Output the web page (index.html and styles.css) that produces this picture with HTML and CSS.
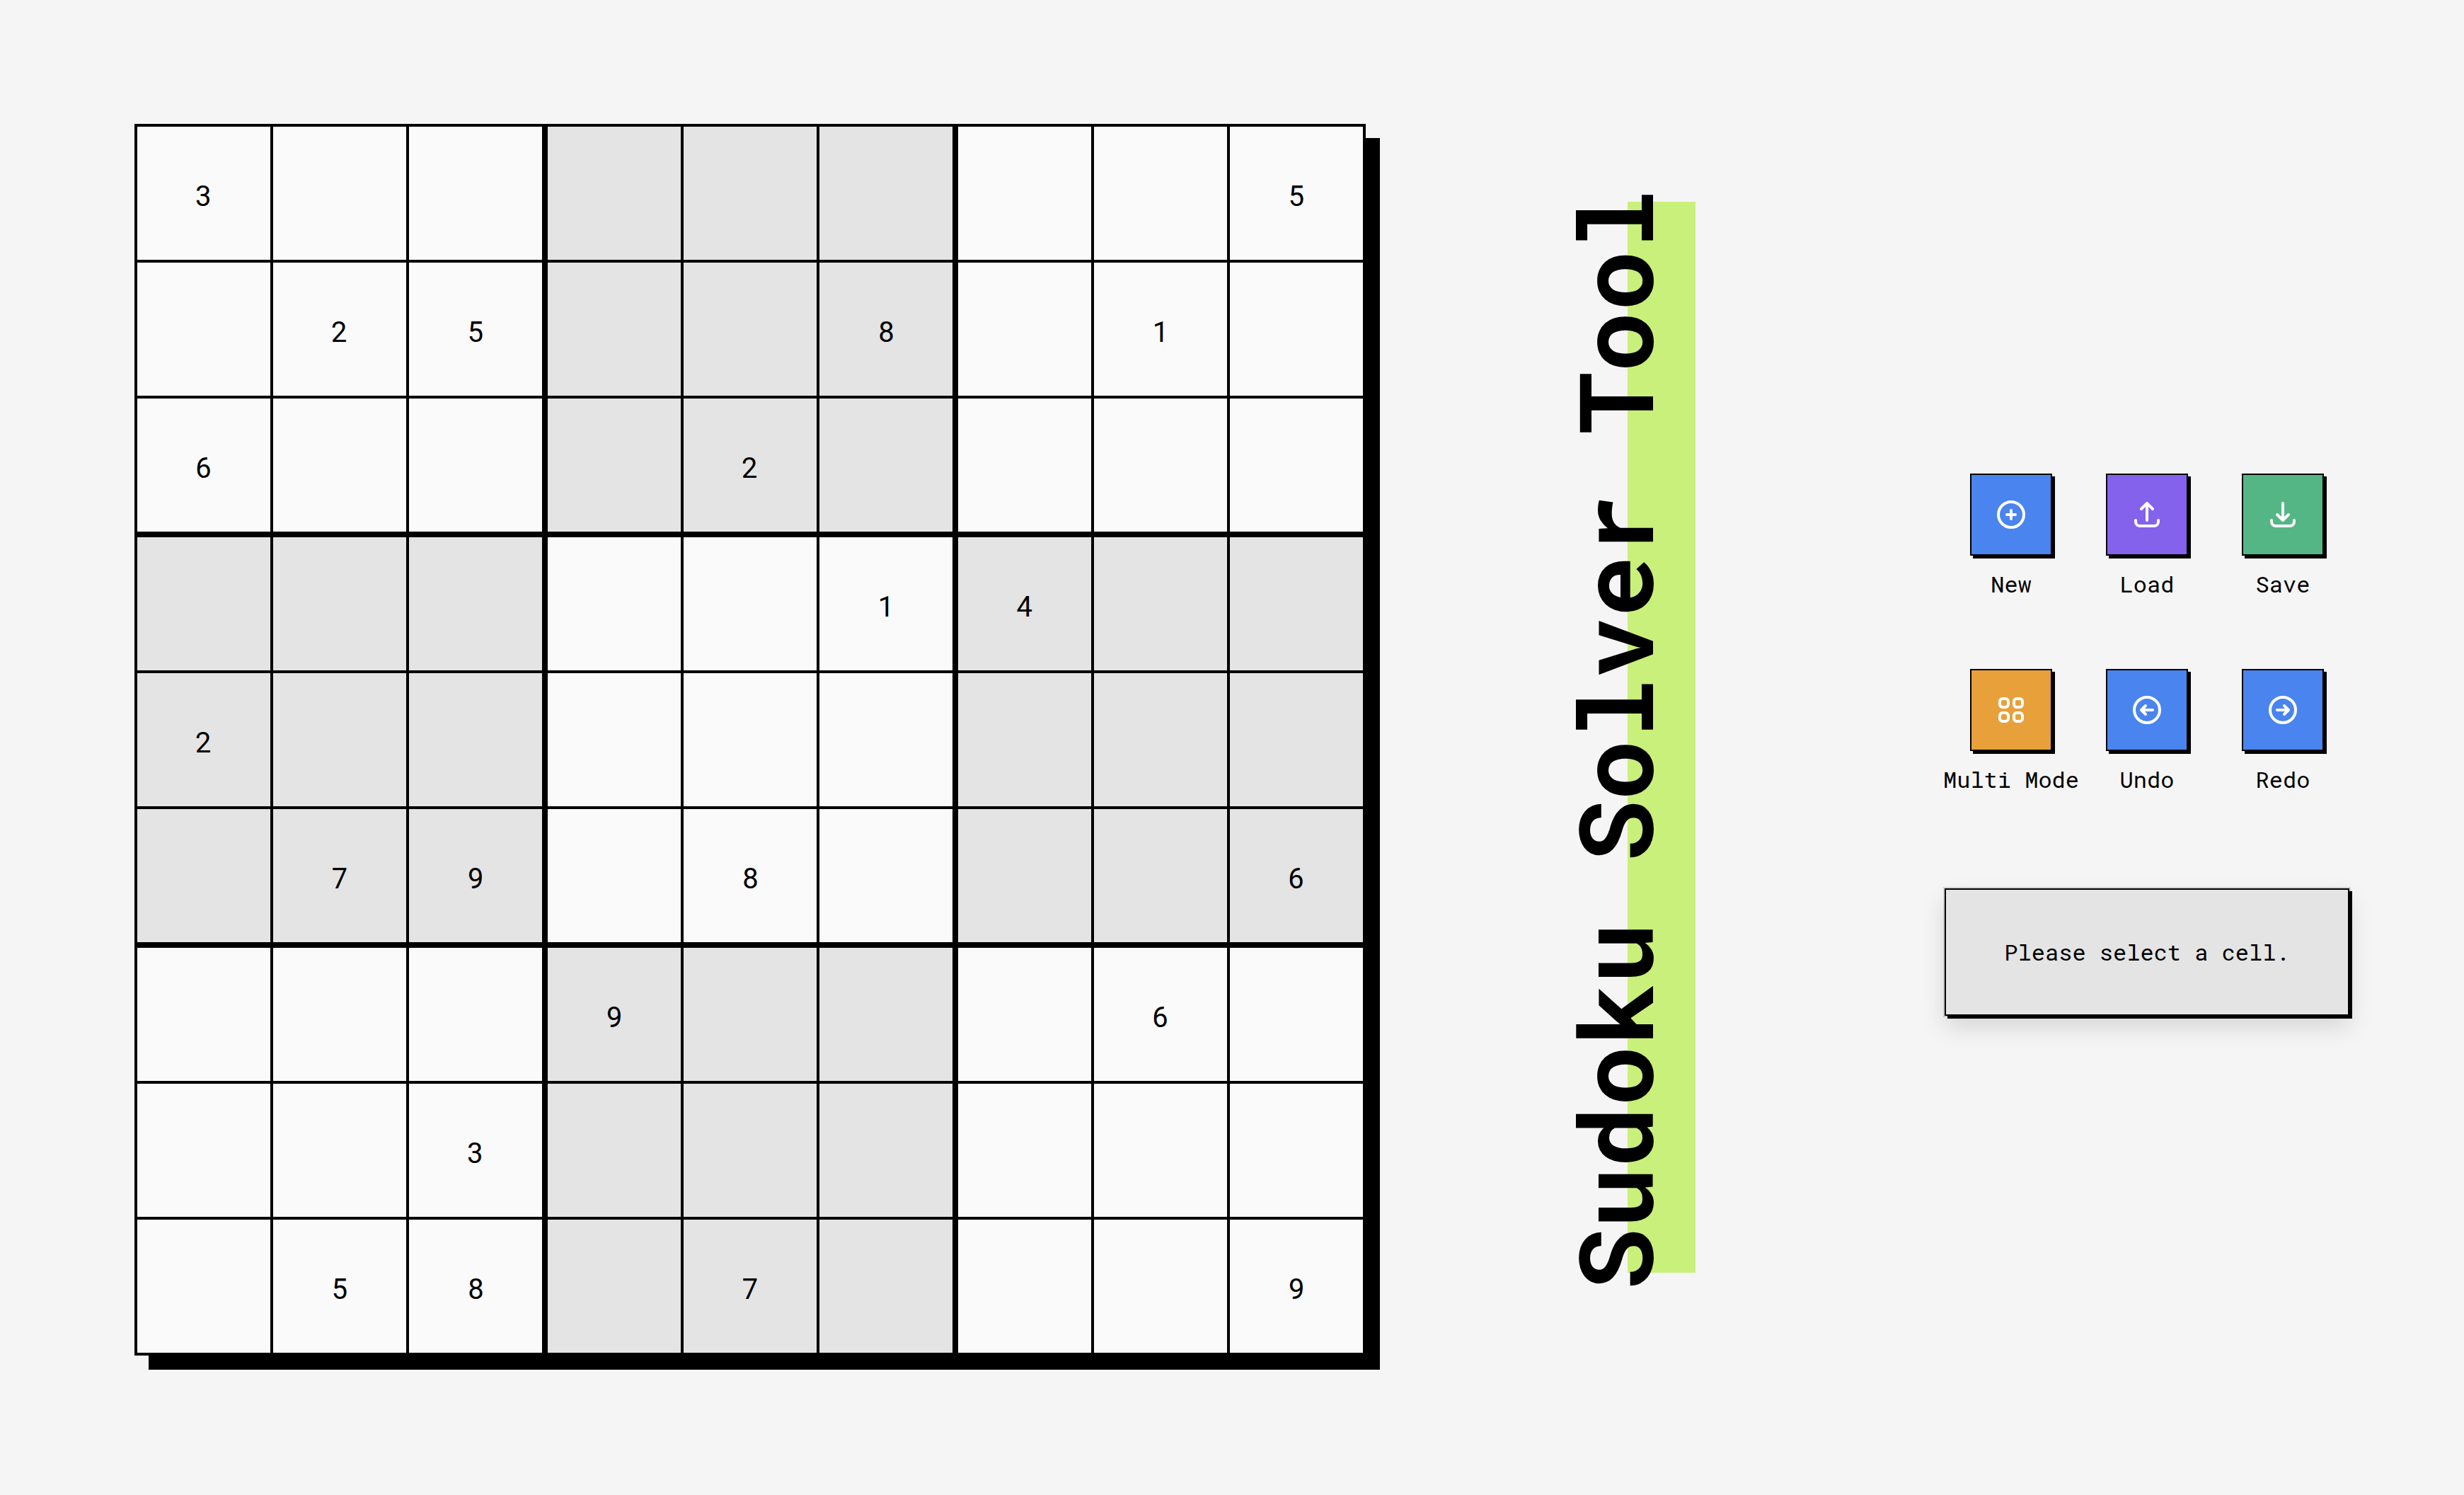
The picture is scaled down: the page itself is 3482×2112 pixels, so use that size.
FILE: index.html
```
<!DOCTYPE html>
<html lang="en">
<head>
  <meta charset="utf-8">
  <meta name="viewport" content="width=device-width, initial-scale=1">
  <title>Sudoku Solver Tool</title>
  <link rel="stylesheet" href="styles.css">
</head>
<body>
  <main class="app">
    <section class="board" id="board" aria-label="Sudoku board"></section>

    <div class="title">
      <h1 class="title-text">Sudoku Solver Tool</h1>
    </div>

    <aside class="controls">
      <div class="tools">
        <div class="tool">
          <button class="tool-button blue" type="button" aria-labelledby="label-new">
            <svg class="icon" viewBox="0 0 24 24" aria-hidden="true"><circle cx="12" cy="12" r="9"/><path d="M12 9v6M9 12h6"/></svg>
          </button>
          <span class="tool-label" id="label-new">New</span>
        </div>
        <div class="tool">
          <button class="tool-button purple" type="button" aria-labelledby="label-load">
            <svg class="icon" viewBox="0 0 24 24" aria-hidden="true"><path d="M4 16v1a3 3 0 0 0 3 3h10a3 3 0 0 0 3-3v-1M8 8l4-4 4 4M12 4v12"/></svg>
          </button>
          <span class="tool-label" id="label-load">Load</span>
        </div>
        <div class="tool">
          <button class="tool-button green" type="button" aria-labelledby="label-save">
            <svg class="icon" viewBox="0 0 24 24" aria-hidden="true"><path d="M4 16v1a3 3 0 0 0 3 3h10a3 3 0 0 0 3-3v-1M16 12l-4 4-4-4M12 16V4"/></svg>
          </button>
          <span class="tool-label" id="label-save">Save</span>
        </div>
        <div class="tool">
          <button class="tool-button orange" type="button" aria-labelledby="label-multi">
            <svg class="icon" viewBox="0 0 24 24" aria-hidden="true"><rect x="4" y="4" width="6" height="6" rx="2"/><rect x="14" y="4" width="6" height="6" rx="2"/><rect x="4" y="14" width="6" height="6" rx="2"/><rect x="14" y="14" width="6" height="6" rx="2"/></svg>
          </button>
          <span class="tool-label" id="label-multi">Multi Mode</span>
        </div>
        <div class="tool">
          <button class="tool-button blue" type="button" aria-labelledby="label-undo">
            <svg class="icon" viewBox="0 0 24 24" aria-hidden="true"><circle cx="12" cy="12" r="9"/><path d="M11 9l-3 3 3 3M8 12h8"/></svg>
          </button>
          <span class="tool-label" id="label-undo">Undo</span>
        </div>
        <div class="tool">
          <button class="tool-button blue" type="button" aria-labelledby="label-redo">
            <svg class="icon" viewBox="0 0 24 24" aria-hidden="true"><circle cx="12" cy="12" r="9"/><path d="M13 15l3-3-3-3M16 12H8"/></svg>
          </button>
          <span class="tool-label" id="label-redo">Redo</span>
        </div>
      </div>
      <p class="message" role="status">Please select a cell.</p>
    </aside>
  </main>
  <script src="board.js"></script>
</body>
</html>
```
FILE: board.js
```
// One string per row; a dot is an empty cell.
const puzzle = [
  "3.......5",
  ".25..8.1.",
  "6...2....",
  ".....14..",
  "2........",
  ".79.8...6",
  "...9...6.",
  "..3......",
  ".58.7...9",
];

const board = document.getElementById("board");

for (let block = 0; block < 9; block++) {
  const box = document.createElement("div");
  box.className = block % 2 ? "block shaded" : "block";
  for (let i = 0; i < 9; i++) {
    const row = Math.floor(block / 3) * 3 + Math.floor(i / 3);
    const col = (block % 3) * 3 + (i % 3);
    const value = puzzle[row][col];
    const cell = document.createElement("button");
    cell.type = "button";
    cell.className = "cell";
    cell.setAttribute("aria-label", `Row ${row + 1}, column ${col + 1}`);
    if (value !== ".") cell.textContent = value;
    box.append(cell);
  }
  board.append(box);
}
```
FILE: styles.css
```
* {
  box-sizing: border-box;
}

body {
  margin: 0;
  background: #f5f5f5;
  color: #000;
  font-family: "Roboto Mono", "Liberation Mono", monospace;
  font-size: 32px;
  font-weight: 450;
  line-height: 48px;
}

.app {
  display: flex;
  align-items: center;
  justify-content: space-between;
  min-height: 100vh;
  padding: 0 160px 22px 190px;
}

/* Board: the black background shows through the gaps as grid lines */
.board {
  flex: 0 1 1740px;
  min-width: 0;
  aspect-ratio: 1;
  display: grid;
  grid-template-columns: repeat(3, 1fr);
  grid-template-rows: repeat(3, 1fr);
  gap: 8px;
  padding: 4px;
  background: #000;
  box-shadow: 20px 20px 0 #000;
}

.block {
  display: grid;
  grid-template-columns: repeat(3, 1fr);
  grid-template-rows: repeat(3, 1fr);
  gap: 4px;
}

.cell {
  min-width: 0;
  padding: 6px 0 0;
  border: 0;
  background: #fafafa;
  color: #000;
  font-family: inherit;
  font-size: 40px;
  font-weight: inherit;
  line-height: 48px;
  cursor: pointer;
}

.shaded .cell {
  background: #e4e4e4;
}

/* Title: runs bottom to top over a highlight band */
.title {
  position: relative;
  z-index: 0;
  padding-right: 116px;
}

.title::before {
  content: "";
  position: absolute;
  z-index: -1;
  top: 18px;
  bottom: 25px;
  right: 72px;
  width: 96px;
  background: #c9f07a;
}

.title-text {
  margin: 0;
  font-size: 144px;
  font-weight: 700;
  line-height: 144px;
  white-space: nowrap;
  writing-mode: vertical-rl;
  transform: rotate(180deg);
}

/* Controls */
.controls {
  display: flex;
  flex-direction: column;
  gap: 130px;
  padding-top: 14px;
}

.tools {
  display: grid;
  grid-template-columns: repeat(3, 192px);
  row-gap: 96px;
}

.tool {
  display: flex;
  flex-direction: column;
  align-items: center;
  gap: 16px;
}

.tool-button {
  display: flex;
  align-items: center;
  justify-content: center;
  width: 116px;
  height: 116px;
  padding: 0;
  border: 2px solid #000;
  box-shadow: 4px 4px 0 #000;
  color: #fff;
  cursor: pointer;
}

.blue {
  background: #4a84ee;
}

.purple {
  background: #8462ec;
}

.green {
  background: #55b685;
}

.orange {
  background: #e8a03a;
}

.icon {
  width: 48px;
  height: 48px;
  fill: none;
  stroke: currentColor;
  stroke-width: 2;
  stroke-linecap: round;
  stroke-linejoin: round;
}

.tool-label {
  white-space: nowrap;
}

.message {
  margin: 0 2px;
  padding: 64px 32px;
  border: 2px solid #000;
  background: #e4e4e4;
  box-shadow: 4px 4px 0 #000, 0 0 0 2px rgba(0, 0, 0, 0.12), 0 16px 32px rgba(0, 0, 0, 0.13);
  text-align: center;
}
```
